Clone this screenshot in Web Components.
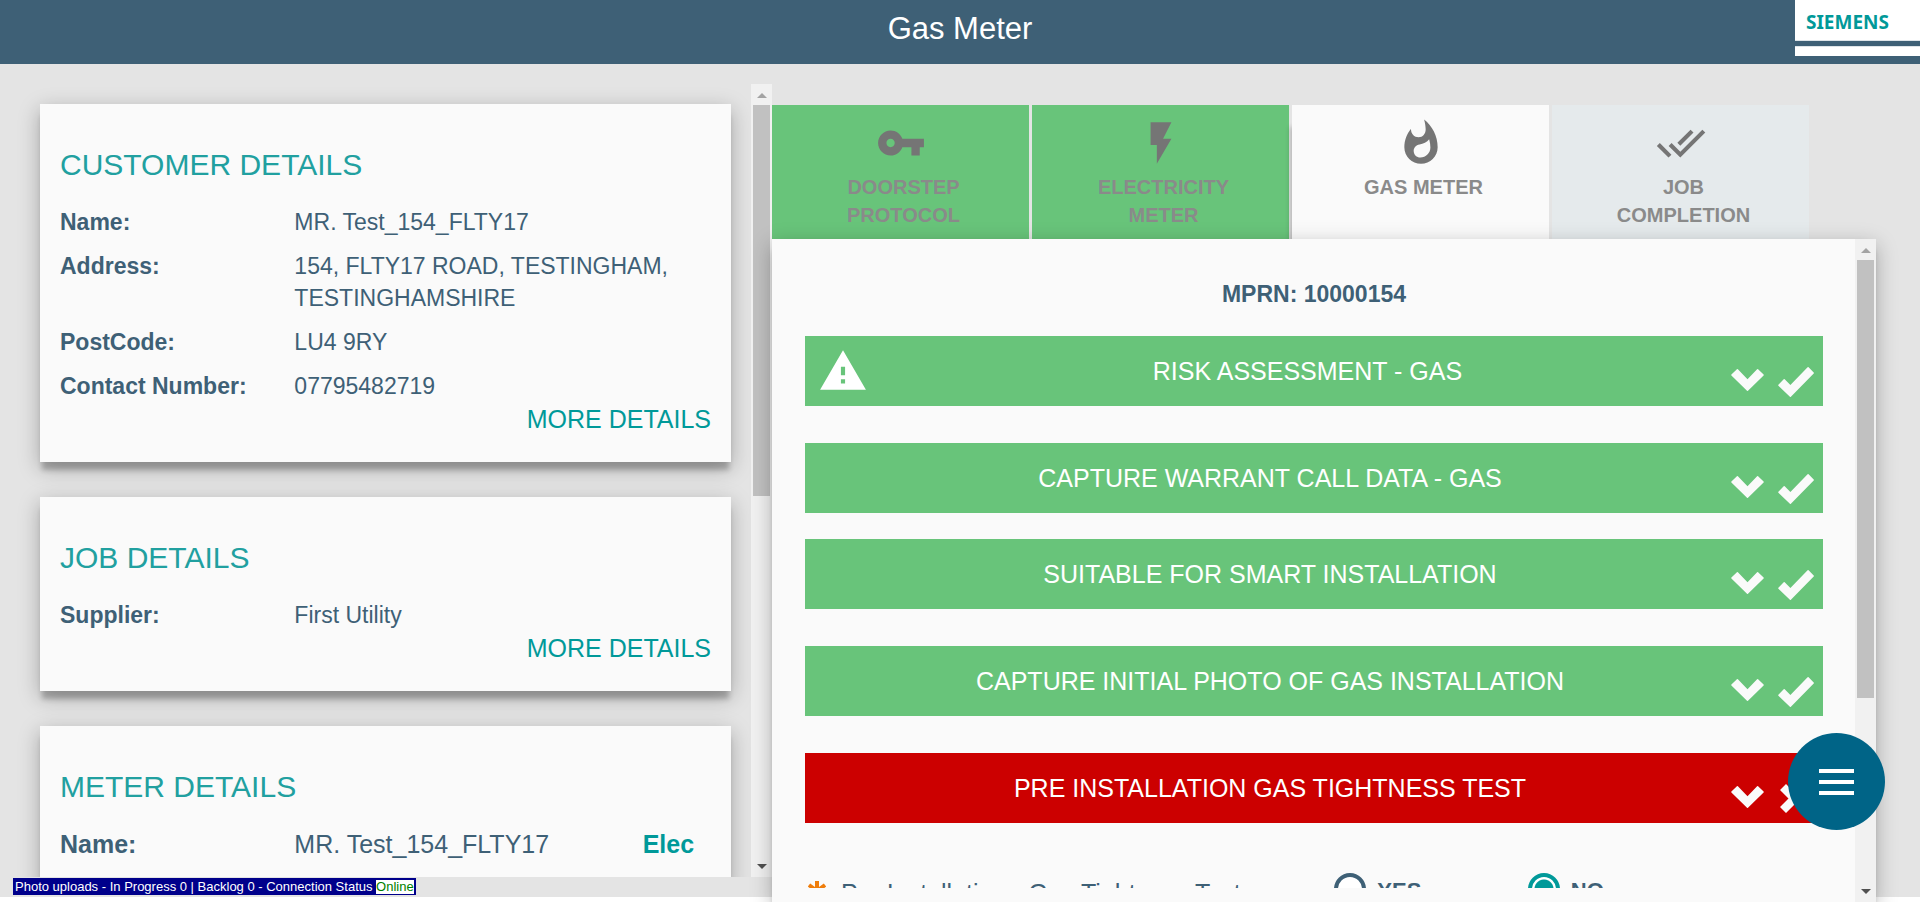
<!DOCTYPE html>
<html lang="en">
<head>
<meta charset="utf-8">
<title>Gas Meter</title>
<style>
  html, body { margin: 0; height: 100%; }
  body {
    background: #fff;
    color: #3e6076;
    font-family: "Liberation Sans", Arial, sans-serif;
    overflow: hidden;
    --teal: #009999;
    --ink: #3e6076;
    --paper: #fafafa;
    --ok: #68c47a;
    --bad: #cc0000;
    --lift: 0 10px 5px -2px rgba(0, 0, 0, .22), 0 6px 20px rgba(0, 0, 0, .28);
  }
</style>
</head>
<body>
<meter-app></meter-app>

<script>
const define = (name, html, setup) => {
  const tpl = document.createElement('template');
  tpl.innerHTML = '<style>*{box-sizing:border-box}:host{box-sizing:border-box}</style>' + html;
  customElements.define(name, class extends HTMLElement {
    constructor() {
      super();
      this.attachShadow({ mode: 'open' }).append(tpl.content.cloneNode(true));
    }
    connectedCallback() { if (setup) setup(this, this.shadowRoot); }
  });
};

/* Header with title and company logo */
define('app-header', `
  <style>
    :host { display: grid; grid-template-columns: 1fr auto 1fr; height: 64px; background: var(--ink); flex: none; }
    h1 { grid-column: 2; margin: 0; font-size: 31px; line-height: 58px; font-weight: 400; color: #fff; }
    company-logo { justify-self: end; }
  </style>
  <h1><slot></slot></h1><company-logo></company-logo>`);

define('company-logo', `
  <style>
    :host { display: flex; flex-direction: column; width: 125px; height: 56px; background: #fff; }
    span { height: 41px; padding-left: 11px; color: var(--teal); font: 700 19px/44px "Noto Sans", "Open Sans", sans-serif; }
    i { display: block; height: 5px; background: var(--ink); box-shadow: 0 0 1px var(--ink); }
  </style>
  <span>SIEMENS</span><i></i>`);

/* Scroll rail: arrows at both ends and a thumb sized by --size */
define('scroll-rail', `
  <style>
    :host { display: flex; flex-direction: column; width: 21px; flex: none; background: #f1f1f1; }
    b { flex: none; height: 21px; display: grid; place-items: center; }
    b::before { content: ""; width: 0; height: 0; border: 5px solid transparent; border-top: 0; border-bottom-color: #a3a3a3; margin-top: 2px; }
    b:last-child::before { border: 5px solid transparent; border-bottom: 0; border-top-color: #505050; margin-top: 0; }
    div { flex: 1; padding: 0 2px; }
    i { display: block; height: var(--size, 50%); background: #c1c1c1; }
  </style>
  <b></b><div><i></i></div><b></b>`);

/* Detail card and its rows */
define('detail-card', `
  <style>
    :host { display: block; flex: none; padding: 43px 20px 27px; background: var(--paper); box-shadow: var(--lift); }
    h2 { margin: 0 0 23px; font-size: 30px; line-height: 36px; font-weight: 400; color: #21a0a0; text-transform: uppercase; }
    dl { margin: 0; display: flex; flex-direction: column; gap: 12px; }
    a { display: block; width: fit-content; margin: 1px 0 0 auto; font-size: 25px; line-height: 32px; color: var(--teal); text-decoration: none; }
    :host([plain]) a { display: none; }
  </style>
  <h2></h2><dl><slot></slot></dl><a href="#more">MORE DETAILS</a>`,
  (el, root) => { root.querySelector('h2').textContent = el.getAttribute('heading'); });

define('detail-row', `
  <style>
    :host { display: grid; grid-template-columns: 9fr 16fr; font-size: 23px; line-height: 32px; }
    :host([wide]) { grid-template-columns: 72fr 107fr 21fr; font-size: 25px; }
    dt { font-weight: 700; }
    dd { margin: 0; }
    slot[name] { display: block; font-weight: 700; color: var(--teal); }
    :host(:not([wide])) slot[name] { display: none; }
  </style>
  <dt></dt><dd><slot></slot></dd><slot name="kind"></slot>`,
  (el, root) => { root.querySelector('dt').textContent = el.getAttribute('label') + ':'; });

/* Upload and connection status */
define('upload-status', `
  <style>
    :host { display: block; width: fit-content; height: 17px; margin: 1px 0 7px 13px; padding: 1px 2px; background: #00008b; color: #fff; font-size: 13px; line-height: 15px; white-space: nowrap; flex: none; }
    output { display: inline-block; background: #fff; color: #008000; line-height: 14px; }
  </style>
  Photo uploads - In Progress 0 | Backlog 0 - Connection Status <output>Online</output>`);

/* Job step tab */
const ICONS = {
  key: 'M12.65 10C11.83 7.67 9.61 6 7 6c-3.31 0-6 2.69-6 6s2.69 6 6 6c2.61 0 4.83-1.67 5.65-4H17v4h4v-4h2v-4H12.65zM7 14c-1.1 0-2-.9-2-2s.9-2 2-2 2 .9 2 2-.9 2-2 2z',
  bolt: 'M7 2v11h3v9l7-12h-4l4-8z',
  flame: 'M13.5.67s.74 2.65.74 4.8c0 2.06-1.35 3.73-3.41 3.73-2.07 0-3.63-1.67-3.63-3.73l.03-.36C5.21 7.51 4 10.62 4 14c0 4.42 3.58 8 8 8s8-3.58 8-8C20 8.61 17.41 3.8 13.5.67zM11.71 19c-1.78 0-3.22-1.4-3.22-3.14 0-1.62 1.05-2.76 2.81-3.12 1.77-.36 3.6-1.21 4.62-2.58.39 1.29.59 2.65.59 4.04 0 2.65-2.15 4.8-4.8 4.8z',
  done: 'M18 7l-1.41-1.41-6.34 6.34 1.41 1.41L18 7zm4.24-1.41L11.66 16.17 7.48 12l-1.41 1.41L11.66 19l12-12-1.42-1.41zM.41 13.41L6 19l1.41-1.41L1.83 12 .41 13.41z'
};
define('step-tab', `
  <style>
    :host { display: block; background: #e5eaec; }
    :host([state="done"]) { background: var(--ok); }
    :host([state="current"]) { background: var(--paper); box-shadow: -4px 20px 5px -2px rgba(0, 0, 0, .2); }
    button { display: flex; flex-direction: column; align-items: center; gap: 5px; width: 100%; height: 134px; padding: 13px 0 0; border: 0; background: none; font: 700 20px/28px "Liberation Sans", Arial, sans-serif; color: #8a8a8a; }
    svg { width: 50px; height: 50px; fill: #757575; flex: none; }
    span { width: 160px; margin-left: 6px; }
  </style>
  <button type="button"><svg viewBox="0 0 24 24"><path/></svg><span><slot></slot></span></button>`,
  (el, root) => { root.querySelector('path').setAttribute('d', ICONS[el.getAttribute('icon')]); });

/* Collapsible section bar */
define('section-bar', `
  <style>
    :host { display: block; margin-bottom: 37px; }
    :host([tight]) { margin-bottom: 26px; }
    button { display: flex; align-items: center; width: 100%; height: 70px; padding: 0 9px 0 4px; border: 0; background: var(--ok); color: #fff; font: 400 25px/32px "Liberation Sans", Arial, sans-serif; }
    :host([failed]) button { background: var(--bad); }
    .label { flex: 1; }
    svg { flex: none; fill: var(--paper); }
    .alert { display: none; width: 50px; height: 50px; margin: 0 16px 0 9px; fill: #fff; }
    :host([alert]) .alert { display: block; }
    .marks { display: flex; align-items: center; gap: 14px; padding-top: 18px; }
    .cross, :host([failed]) .tick { display: none; }
    :host([failed]) .cross { display: block; }
  </style>
  <button type="button">
    <svg class="alert" viewBox="0 0 24 24"><path d="M1 21h22L12 2 1 21zm12-3h-2v-2h2v2zm0-4h-2v-4h2v4z"/></svg>
    <span class="label"><slot></slot></span>
    <span class="marks">
      <svg width="33" height="22" viewBox="0 0 33 22"><path d="M.4 5.6 5.9.2q.5-.4 1 0l9.6 10L26.1.2q.5-.4 1 0l5.500 5.400q.4.500 0 1L17 21.700q-.5.500-1 0L.400 6.600q-.4-.5 0-1z"/></svg>
      <svg class="tick" width="36" height="34" viewBox="0 0 36 34"><path d="M.4 21.700 5.700 16.300q.5-.4 1 0l5.700 5.600L29.600 4.200q.5-.4 1 0l5.100 5.200q.5.500 0 1L12.900 33.700q-.5.400-1 0L.400 22.700q-.4-.5 0-1z"/></svg>
      <svg class="cross" width="36" height="34" viewBox="0 0 36 34"><path d="M2 10 8 4l8.500 8.500L25 4l6 6-8.500 8.500L31 27l-6 6-8.500-8.500L8 33l-6-6 8.500-8.500z"/></svg>
    </span>
  </button>`);

/* Required yes / no question */
define('yes-no', `
  <style>
    :host { display: grid; grid-template-columns: 52fr 19fr 29fr; height: 36px; margin-top: 50px; }
    .q { display: flex; gap: 15px; padding: 4px 0 0 3px; font-size: 25px; line-height: 32px; white-space: nowrap; }
    svg { flex: none; width: 18px; height: 20px; margin-top: 4px; stroke: #ef7d0b; stroke-width: 4; }
    label { display: flex; gap: 11px; font-size: 22px; font-weight: 700; line-height: 36px; }
    input { appearance: none; flex: none; width: 32px; height: 32px; margin: 0; border: 4px solid var(--ink); border-radius: 50%; background: #fff; }
    input:checked { border-color: var(--teal); background: radial-gradient(circle, var(--teal) 9px, #fff 10px); }
  </style>
  <div class="q"><svg viewBox="0 0 18 20"><path d="M9 0v20M1 4l16 12M17 4 1 16"/></svg><slot></slot></div>
  <label><input type="radio" name="a">YES</label>
  <label><input type="radio" name="a" checked>NO</label>`);

/* Floating menu button */
define('menu-fab', `
  <style>
    :host { position: absolute; right: 35px; bottom: 72px; }
    button { display: flex; flex-direction: column; align-items: center; justify-content: center; gap: 7px; width: 97px; height: 97px; padding: 0; border: 0; border-radius: 50%; background: #006487; }
    i { width: 35px; height: 4px; background: #fff; }
  </style>
  <button type="button" aria-label="Menu"><i></i><i></i><i></i></button>`);

define('meter-app', `
  <style>
    :host { display: flex; flex-direction: column; height: 100vh; position: relative; }
    main { flex: 1; min-height: 0; display: grid; grid-template: minmax(0, 1fr) / 193fr 276fr; padding-right: 44px;
      background: linear-gradient(#e4e4e4, #e4e4e4) top / 100% calc(100% - 5px) no-repeat; }
    .info { display: flex; flex-direction: column; min-width: 0; min-height: 0; padding-top: 20px; }
    .scroll { flex: 1; min-height: 0; display: flex; }
    .cards { flex: 1; min-width: 0; overflow: hidden; display: flex; flex-direction: column; gap: 35px; padding: 20px 20px 0 40px; }
    .job { display: flex; flex-direction: column; min-width: 0; min-height: 0; padding-top: 41px; }
    nav { display: grid; grid-template-columns: repeat(4, 1fr); gap: 3px; margin-right: 67px; }
    .panel { position: relative; flex: 1; min-height: 0; display: flex; background: var(--paper); box-shadow: var(--lift); }
    .body { flex: 1; min-width: 0; margin-bottom: 14px; padding: 41px 32px 0 33px; overflow: hidden; }
    h3 { margin: 0 0 28px; font-size: 23px; line-height: 28px; text-align: center; }
    .left { --size: 52%; }
    .right { --size: 70.5%; }
  </style>
  <app-header>Gas Meter</app-header>
  <main>
    <section class="info">
      <div class="scroll">
        <div class="cards">
          <detail-card heading="Customer Details">
            <detail-row label="Name">MR. Test_154_FLTY17</detail-row>
            <detail-row label="Address">154, FLTY17 ROAD, TESTINGHAM, TESTINGHAMSHIRE</detail-row>
            <detail-row label="PostCode">LU4 9RY</detail-row>
            <detail-row label="Contact Number">07795482719</detail-row>
          </detail-card>
          <detail-card heading="Job Details">
            <detail-row label="Supplier">First Utility</detail-row>
          </detail-card>
          <detail-card heading="Meter Details" plain>
            <detail-row label="Name" wide>MR. Test_154_FLTY17<span slot="kind">Elec</span></detail-row>
          </detail-card>
        </div>
        <scroll-rail class="left"></scroll-rail>
      </div>
      <upload-status></upload-status>
    </section>
    <section class="job">
      <nav>
        <step-tab icon="key" state="done">DOORSTEP PROTOCOL</step-tab>
        <step-tab icon="bolt" state="done">ELECTRICITY METER</step-tab>
        <step-tab icon="flame" state="current">GAS METER</step-tab>
        <step-tab icon="done">JOB COMPLETION</step-tab>
      </nav>
      <div class="panel">
        <div class="body">
          <h3>MPRN: 10000154</h3>
          <section-bar alert>RISK ASSESSMENT - GAS</section-bar>
          <section-bar tight>CAPTURE WARRANT CALL DATA - GAS</section-bar>
          <section-bar>SUITABLE FOR SMART INSTALLATION</section-bar>
          <section-bar>CAPTURE INITIAL PHOTO OF GAS INSTALLATION</section-bar>
          <section-bar failed>PRE INSTALLATION GAS TIGHTNESS TEST</section-bar>
          <yes-no>Pre Installation - Gas Tightness Test</yes-no>
        </div>
        <scroll-rail class="right"></scroll-rail>
      </div>
    </section>
  </main>
  <menu-fab></menu-fab>`);
</script>
</body>
</html>
